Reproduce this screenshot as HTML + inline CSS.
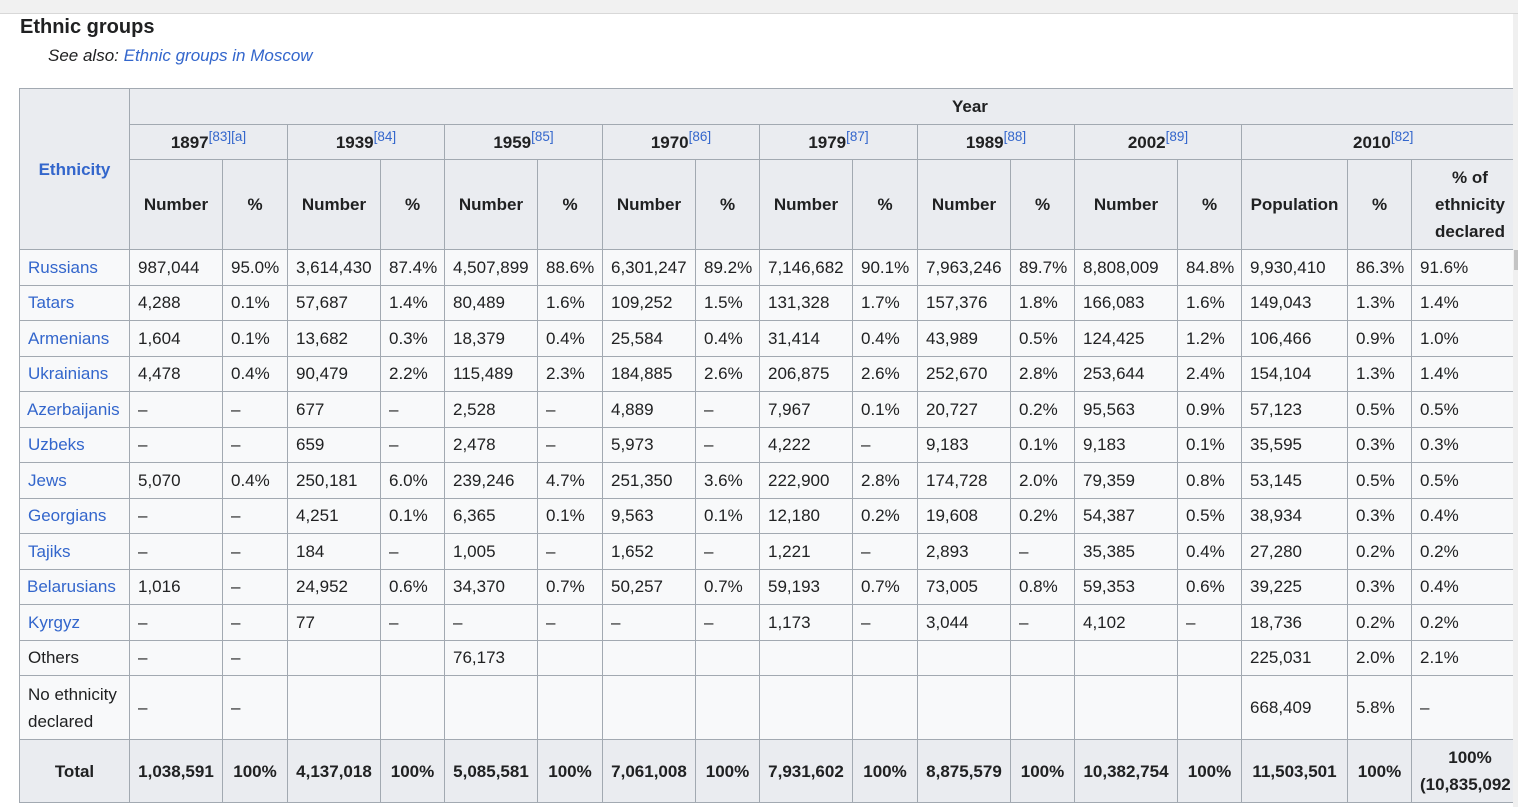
<!DOCTYPE html>
<html><head><meta charset="utf-8"><style>
*{box-sizing:border-box}
body{margin:0;width:1518px;height:807px;overflow:hidden;background:#fff;font-family:"Liberation Sans",Arial,sans-serif;color:#202122;position:relative}
.top{position:absolute;left:0;top:0;width:1518px;height:14px;background:#f1f1f1;border-bottom:1px solid #d8d8d8}
.sb{position:absolute;left:1513px;top:14px;width:5px;height:793px;background:#f0f0f0}
.sbt{position:absolute;left:1514px;top:250px;width:4px;height:20px;background:#c4c4c4}
h2{position:absolute;left:20px;top:16px;margin:0;font-size:20px;font-weight:bold}
.see{position:absolute;left:48px;top:46px;font-size:17px;font-style:italic}
a{color:#3366cc;text-decoration:none}
.wrap{position:absolute;left:19px;top:88px;width:1494px;height:719px;overflow:hidden}
table{border-collapse:collapse;table-layout:fixed;width:1536px;font-size:17px;background:#f8f9fa}
td,th{border:1px solid #a2a9b1;padding:0 8px;white-space:nowrap;overflow:visible;line-height:27px}
th{background:#eaecf0;font-weight:bold;text-align:center}
sup{font-size:13.5px;font-weight:normal;color:#3366cc;vertical-align:7px;line-height:0}
tr.d td{height:35.5px}
.tot th{height:63px}
</style></head><body>
<div class="top"></div>
<h2>Ethnic groups</h2>
<div class="see">See also: <a>Ethnic groups in Moscow</a></div>
<div class="wrap"><table>
<colgroup><col style="width:110px"><col style="width:93px"><col style="width:65px"><col style="width:93px"><col style="width:64px"><col style="width:93px"><col style="width:65px"><col style="width:93px"><col style="width:64px"><col style="width:93px"><col style="width:65px"><col style="width:93px"><col style="width:64px"><col style="width:103px"><col style="width:64px"><col style="width:106px"><col style="width:64px"><col style="width:160px"></colgroup>
<tr style="height:36px"><th rowspan="3"><a>Ethnicity</a></th><th colspan="17" style="text-align:left;padding-left:822px">Year</th></tr>
<tr style="height:35px"><th colspan="2">1897<sup>[83][a]</sup></th><th colspan="2">1939<sup>[84]</sup></th><th colspan="2">1959<sup>[85]</sup></th><th colspan="2">1970<sup>[86]</sup></th><th colspan="2">1979<sup>[87]</sup></th><th colspan="2">1989<sup>[88]</sup></th><th colspan="2">2002<sup>[89]</sup></th><th colspan="3" style="text-align:left;padding-left:111px">2010<sup>[82]</sup></th></tr>
<tr style="height:90px"><th>Number</th><th>%</th><th>Number</th><th>%</th><th>Number</th><th>%</th><th>Number</th><th>%</th><th>Number</th><th>%</th><th>Number</th><th>%</th><th>Number</th><th>%</th><th>Population</th><th>%</th><th style="text-align:left;padding-left:8px;white-space:normal;width:116px"><div style="width:100px;text-align:center">% of ethnicity declared</div></th></tr>
<tr class="d"><td><a>Russians</a></td><td>987,044</td><td>95.0%</td><td>3,614,430</td><td>87.4%</td><td>4,507,899</td><td>88.6%</td><td>6,301,247</td><td>89.2%</td><td>7,146,682</td><td>90.1%</td><td>7,963,246</td><td>89.7%</td><td>8,808,009</td><td>84.8%</td><td>9,930,410</td><td>86.3%</td><td>91.6%</td></tr>
<tr class="d"><td><a>Tatars</a></td><td>4,288</td><td>0.1%</td><td>57,687</td><td>1.4%</td><td>80,489</td><td>1.6%</td><td>109,252</td><td>1.5%</td><td>131,328</td><td>1.7%</td><td>157,376</td><td>1.8%</td><td>166,083</td><td>1.6%</td><td>149,043</td><td>1.3%</td><td>1.4%</td></tr>
<tr class="d"><td><a>Armenians</a></td><td>1,604</td><td>0.1%</td><td>13,682</td><td>0.3%</td><td>18,379</td><td>0.4%</td><td>25,584</td><td>0.4%</td><td>31,414</td><td>0.4%</td><td>43,989</td><td>0.5%</td><td>124,425</td><td>1.2%</td><td>106,466</td><td>0.9%</td><td>1.0%</td></tr>
<tr class="d"><td><a>Ukrainians</a></td><td>4,478</td><td>0.4%</td><td>90,479</td><td>2.2%</td><td>115,489</td><td>2.3%</td><td>184,885</td><td>2.6%</td><td>206,875</td><td>2.6%</td><td>252,670</td><td>2.8%</td><td>253,644</td><td>2.4%</td><td>154,104</td><td>1.3%</td><td>1.4%</td></tr>
<tr class="d"><td style="padding-left:7px"><a>Azerbaijanis</a></td><td>–</td><td>–</td><td>677</td><td>–</td><td>2,528</td><td>–</td><td>4,889</td><td>–</td><td>7,967</td><td>0.1%</td><td>20,727</td><td>0.2%</td><td>95,563</td><td>0.9%</td><td>57,123</td><td>0.5%</td><td>0.5%</td></tr>
<tr class="d"><td><a>Uzbeks</a></td><td>–</td><td>–</td><td>659</td><td>–</td><td>2,478</td><td>–</td><td>5,973</td><td>–</td><td>4,222</td><td>–</td><td>9,183</td><td>0.1%</td><td>9,183</td><td>0.1%</td><td>35,595</td><td>0.3%</td><td>0.3%</td></tr>
<tr class="d"><td><a>Jews</a></td><td>5,070</td><td>0.4%</td><td>250,181</td><td>6.0%</td><td>239,246</td><td>4.7%</td><td>251,350</td><td>3.6%</td><td>222,900</td><td>2.8%</td><td>174,728</td><td>2.0%</td><td>79,359</td><td>0.8%</td><td>53,145</td><td>0.5%</td><td>0.5%</td></tr>
<tr class="d"><td><a>Georgians</a></td><td>–</td><td>–</td><td>4,251</td><td>0.1%</td><td>6,365</td><td>0.1%</td><td>9,563</td><td>0.1%</td><td>12,180</td><td>0.2%</td><td>19,608</td><td>0.2%</td><td>54,387</td><td>0.5%</td><td>38,934</td><td>0.3%</td><td>0.4%</td></tr>
<tr class="d"><td><a>Tajiks</a></td><td>–</td><td>–</td><td>184</td><td>–</td><td>1,005</td><td>–</td><td>1,652</td><td>–</td><td>1,221</td><td>–</td><td>2,893</td><td>–</td><td>35,385</td><td>0.4%</td><td>27,280</td><td>0.2%</td><td>0.2%</td></tr>
<tr class="d"><td style="padding-left:7px"><a>Belarusians</a></td><td>1,016</td><td>–</td><td>24,952</td><td>0.6%</td><td>34,370</td><td>0.7%</td><td>50,257</td><td>0.7%</td><td>59,193</td><td>0.7%</td><td>73,005</td><td>0.8%</td><td>59,353</td><td>0.6%</td><td>39,225</td><td>0.3%</td><td>0.4%</td></tr>
<tr class="d"><td><a>Kyrgyz</a></td><td>–</td><td>–</td><td>77</td><td>–</td><td>–</td><td>–</td><td>–</td><td>–</td><td>1,173</td><td>–</td><td>3,044</td><td>–</td><td>4,102</td><td>–</td><td>18,736</td><td>0.2%</td><td>0.2%</td></tr>
<tr class="d"><td>Others</td><td>–</td><td>–</td><td></td><td></td><td>76,173</td><td></td><td></td><td></td><td></td><td></td><td></td><td></td><td></td><td></td><td>225,031</td><td>2.0%</td><td>2.1%</td></tr>
<tr style="height:64px"><td>No ethnicity<br>declared</td><td>–</td><td>–</td><td></td><td></td><td></td><td></td><td></td><td></td><td></td><td></td><td></td><td></td><td></td><td></td><td>668,409</td><td>5.8%</td><td>–</td></tr>
<tr class="tot"><th>Total</th><th>1,038,591</th><th>100%</th><th>4,137,018</th><th>100%</th><th>5,085,581</th><th>100%</th><th>7,061,008</th><th>100%</th><th>7,931,602</th><th>100%</th><th>8,875,579</th><th>100%</th><th>10,382,754</th><th>100%</th><th>11,503,501</th><th>100%</th><th style="text-align:left"><div style="width:100px;text-align:center">100%</div>(10,835,092</th></tr>
</table></div>
<div class="sb"></div><div class="sbt"></div>
</body></html>
